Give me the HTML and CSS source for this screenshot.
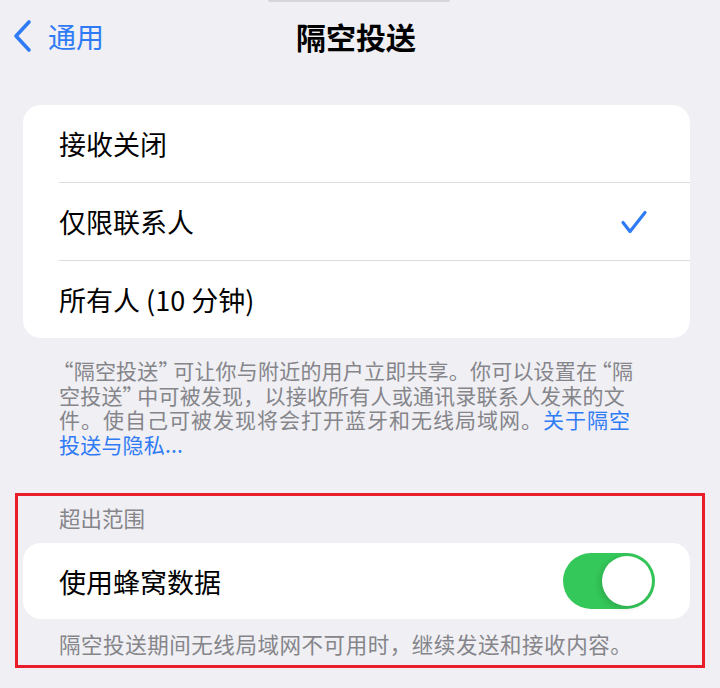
FILE: index.html
```html
<!DOCTYPE html>
<html lang="zh-CN">
<head>
    <meta charset="UTF-8">
    <meta name="viewport" content="width=device-width, initial-scale=1.0">
    <title>隔空投送</title>
    <link rel="stylesheet" href="styles.css">
</head>
<body>
    <div class="top-notch"></div>

    <!-- 导航栏 -->
    <div class="nav-bar">
        <div class="nav-back">
            <svg class="chevron" width="22" height="34" viewBox="0 0 22 34">
                <path d="M17 3 L4 17 L17 31" fill="none" stroke="#2f7bf5" stroke-width="3.6" stroke-linecap="round" stroke-linejoin="round"/>
            </svg>
            <span>通用</span>
        </div>
        <div class="nav-title">隔空投送</div>
        <div></div>
    </div>

    <div class="group">
        <div class="row"><span>接收关闭</span></div>
        <div class="row">
            <span>仅限联系人</span>
            <svg class="check" width="28" height="26" viewBox="0 0 28 26">
                <path d="M3 13.5 L10 22.5 L25 3.5" fill="none" stroke="#2f7bf5" stroke-width="3.2" stroke-linecap="round" stroke-linejoin="round"/>
            </svg>
        </div>
        <div class="row"><span>所有人 (10 分钟)</span></div>
    </div>

    <p class="group-footer"><span class="q-open">“</span>隔空投送<span class="q-close">”</span>可让你与附近的用户立即共享。你可以设置在<span class="q-open">“</span>隔<br>空投送<span class="q-close">”</span>中可被发现，以接收所有人或通讯录联系人发来的文<br><span class="wide">件。使自己可被发现将会打开蓝牙和无线局域网。<span class="link">关于隔空</span></span><br><span class="link">投送与隐私...</span></p>

    <!-- 红框部分 -->
    <div class="highlight">
        <div class="group-header">超出范围</div>
        <div class="group group-inner">
            <div class="row">
                <span>使用蜂窝数据</span>
                <div class="toggle"><div class="knob"></div></div>
            </div>
        </div>
        <p class="group-footer group-footer-inner">隔空投送期间无线局域网不可用时，继续发送和接收内容。</p>
    </div>
</body>
</html>
```

FILE: styles.css
```css
body {
    margin: 0;
    width: 720px;
    height: 688px;
    overflow: hidden;
    position: relative;
    background-color: #efeff4;
    font-family: "Noto Sans CJK SC", "Noto Sans", sans-serif;
    color: #000;
    text-spacing-trim: space-all;
}

.top-notch {
    position: absolute;
    top: 0;
    left: 268px;
    width: 182px;
    height: 2px;
    border-radius: 0 0 2px 2px;
    background-color: #d5d5da;
}

/* 导航栏 */
.nav-bar {
    height: 72px;
    padding: 0 20px 0 12px;
    display: grid;
    grid-template-columns: 1fr auto 1fr;
    align-items: center;
}

.nav-back {
    display: flex;
    align-items: center;
    color: #2f7bf5;
    font-size: 28px;
    line-height: 34px;
}

.chevron {
    margin-right: 14px;
}

.nav-title {
    font-size: 30px;
    font-weight: 700;
    line-height: 36px;
}

/* 列表 */
.group {
    margin: 33px 30px 0 23px;
    background-color: #fff;
    border-radius: 18px;
    overflow: hidden;
}

.row {
    margin-left: 36px;
    padding-right: 42px;
    height: 77px;
    display: flex;
    align-items: center;
    justify-content: space-between;
    font-size: 27px;
    border-bottom: 1px solid #dcdce0;
}

.row:last-child {
    border-bottom: none;
}

.group-footer {
    margin: 20px 0 0 59px;
    font-size: 21px;
    letter-spacing: 0.2px;
    line-height: 24.5px;
    color: #85858a;
    white-space: nowrap;
}

/* 引号用半角宽度 */
.q-open, .q-close {
    font-feature-settings: "halt";
}

.q-open {
    margin-left: 4px;
}

.q-close {
    margin-right: 4px;
}

/* 第三行句号较窄，补回宽度 */
.wide {
    letter-spacing: 1px;
}

.link {
    color: #2f7bf5;
}

/* 红框 */
.highlight {
    margin: 37px 15px 0 15px;
    border: 3px solid #e81f2b;
    padding: 10px 0 9px 0;
}

.group-header {
    padding-left: 41px;
    font-size: 21.5px;
    line-height: 24px;
    color: #85858a;
}

.group-inner {
    margin: 13px 12px 0 5px;
}

.group-inner .row {
    height: 76px;
    padding-right: 35px;
}

.group-footer-inner {
    margin: 13px 0 0 41px;
    font-size: 21.5px;
    letter-spacing: 0.55px;
    line-height: 24px;
}

.toggle {
    width: 92px;
    height: 56px;
    border-radius: 28px;
    background-color: #34c759;
    position: relative;
}

.knob {
    position: absolute;
    top: 3px;
    right: 3px;
    width: 50px;
    height: 50px;
    border-radius: 50%;
    background-color: #fff;
    box-shadow: -2px 2px 6px rgba(0, 0, 0, 0.15);
}
```
